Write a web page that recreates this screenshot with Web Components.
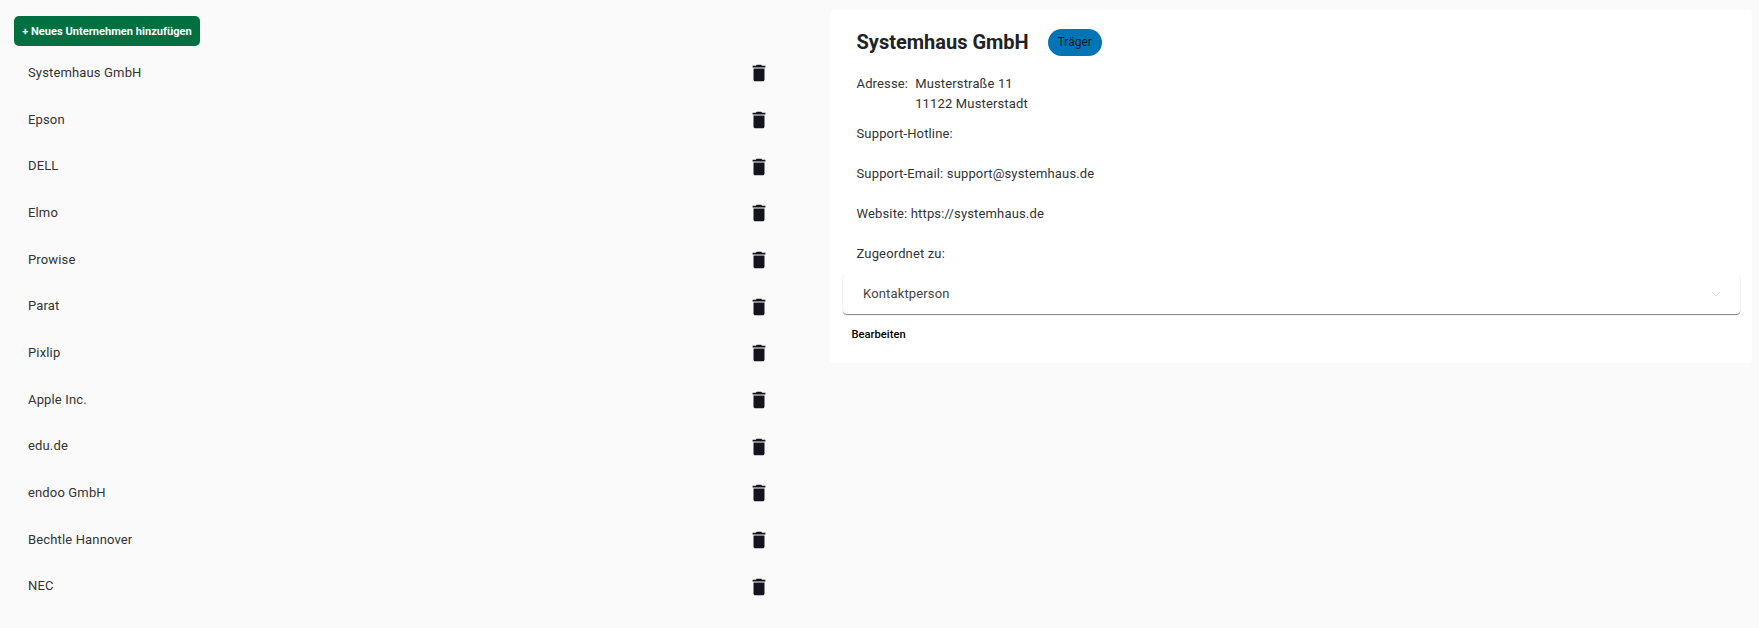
<!DOCTYPE html>
<html lang="de">
<head>
<meta charset="utf-8">
<title>Unternehmen</title>
<style>
  html, body { margin: 0; height: 100%; background: #fafafa; }
  body { font-family: Roboto, "Liberation Sans", sans-serif; overflow: hidden; }
</style>
</head>
<body>
<company-page>
  <company-list slot="list">
    <company-row name="Systemhaus GmbH"></company-row>
    <company-row name="Epson"></company-row>
    <company-row name="DELL"></company-row>
    <company-row name="Elmo"></company-row>
    <company-row name="Prowise"></company-row>
    <company-row name="Parat"></company-row>
    <company-row name="Pixlip"></company-row>
    <company-row name="Apple Inc."></company-row>
    <company-row name="edu.de"></company-row>
    <company-row name="endoo GmbH"></company-row>
    <company-row name="Bechtle Hannover"></company-row>
    <company-row name="NEC"></company-row>
  </company-list>
  <company-detail slot="detail" name="Systemhaus GmbH" chip="Träger">
    <info-line>Support-Hotline:</info-line>
    <info-line>Support-Email: support@systemhaus.de</info-line>
    <info-line>Website: https://systemhaus.de</info-line>
    <info-line>Zugeordnet zu:</info-line>
  </company-detail>
</company-page>

<script>
class CompanyPage extends HTMLElement {
  constructor() {
    super();
    this.attachShadow({ mode: "open" });
    this.shadowRoot.innerHTML = `
    <style>
      :host {
        display: grid;
        grid-template-columns: 830px 922px;
        align-items: start;
      }
      .detail { padding-top: 10px; }
    </style>
    <div class="list"><slot name="list"></slot></div>
    <div class="detail"><slot name="detail"></slot></div>
    `;
  }
}

class CompanyList extends HTMLElement {
  constructor() {
    super();
    this.attachShadow({ mode: "open" });
    this.shadowRoot.innerHTML = `
    <style>
      :host { display: block; padding: 16px 0 0 14px; }
      button {
        display: block;
        width: 186px;
        height: 30px;
        padding: 0;
        border: 0;
        border-radius: 5px;
        background: #007041;
        color: #fff;
        font: 700 11.1px Roboto, sans-serif;
        white-space: nowrap;
      }
      .rows { display: flex; flex-direction: column; width: 756px; margin-top: 3px; }
    </style>
    <button>+ Neues Unternehmen hinzufügen</button>
    <div class="rows"><slot></slot></div>
    `;
  }
}

class CompanyRow extends HTMLElement {
  constructor() {
    super();
    this.attachShadow({ mode: "open" });
    this.shadowRoot.innerHTML = `
    <style>
      :host {
        display: flex;
        align-items: center;
        justify-content: space-between;
        height: 46.68px;
        padding-left: 14px;
        font-size: 13px;
        letter-spacing: 0.15px;
        color: #333;
      }
      svg { display: block; width: 22px; height: 22px; margin-top: 2px; fill: #14141f; }
    </style>
    <span class="name"></span>
    <svg viewBox="0 0 24 24"><path d="M6 19c0 1.1.9 2 2 2h8c1.1 0 2-.9 2-2V7H6v12zM19 4h-3.5l-1-1h-5l-1 1H5v2h14V4z"/></svg>
    `;
  }
  connectedCallback() {
    this.shadowRoot.querySelector(".name").textContent = this.getAttribute("name");
  }
}

class InfoLine extends HTMLElement {
  constructor() {
    super();
    this.attachShadow({ mode: "open" });
    this.shadowRoot.innerHTML = `
    <style>
      :host {
        display: block;
        height: 40.2px;
        padding-left: 26.5px;
        font-size: 13px;
        line-height: 20px;
        letter-spacing: 0.15px;
        color: #333;
      }
    </style>
    <slot></slot>
    `;
  }
}

class CompanyDetail extends HTMLElement {
  constructor() {
    super();
    this.attachShadow({ mode: "open" });
    this.shadowRoot.innerHTML = `
    <style>
      :host {
        display: block;
        height: 353px;
        box-sizing: border-box;
        padding-top: 19px;
        background: #fff;
        border-radius: 4px;
        color: #222;
      }
      header { display: flex; align-items: center; gap: 19px; height: 26px; padding-left: 26.5px; }
      h1 { margin: 0; font-size: 20px; font-weight: 700; line-height: 26px; color: #222; }
      .chip {
        width: 54px;
        height: 27px;
        border-radius: 14px;
        background: #0075b5;
        color: #101828;
        font-size: 12px;
        line-height: 27px;
        text-align: center;
      }
      .address {
        display: flex;
        gap: 7px;
        margin-top: 18.5px;
        padding-left: 26.5px;
        font-size: 13px;
        line-height: 20px;
        letter-spacing: 0.15px;
        color: #333;
      }
      .lines { margin-top: 10px; }
      contact-accordion { margin: -10.5px 12.5px 0 13px; }
      .edit {
        margin: 11.5px 0 0 21.5px;
        font-size: 11.2px;
        font-weight: 500;
        line-height: 20px;
        color: #000;
      }
    </style>
    <header><h1></h1><span class="chip"></span></header>
    <div class="address">
      <span>Adresse:</span>
      <span>Musterstraße 11<br>11122 Musterstadt</span>
    </div>
    <div class="lines"><slot></slot></div>
    <contact-accordion>Kontaktperson</contact-accordion>
    <div class="edit">Bearbeiten</div>
    `;
  }
  connectedCallback() {
    this.shadowRoot.querySelector("h1").textContent = this.getAttribute("name");
    this.shadowRoot.querySelector(".chip").textContent = this.getAttribute("chip");
  }
}

class ContactAccordion extends HTMLElement {
  constructor() {
    super();
    this.attachShadow({ mode: "open" });
    this.shadowRoot.innerHTML = `
    <style>
      :host {
        display: flex;
        align-items: center;
        justify-content: space-between;
        height: 40px;
        padding: 0 19px 0 20px;
        background: #fff;
        border-radius: 4px;
        box-shadow: 0 1px 1px rgba(0,0,0,.5), 0 0 1px rgba(0,0,0,.03);
        font-size: 13px;
        letter-spacing: 0.15px;
        color: #444;
      }
      svg { display: block; width: 10px; height: 6px; fill: none; stroke: #e4e4e8; stroke-width: 1; }
    </style>
    <span><slot></slot></span>
    <svg viewBox="0 0 10 6"><path d="M1 1l4 4 4-4"/></svg>
    `;
  }
}

customElements.define("company-page", CompanyPage);
customElements.define("company-list", CompanyList);
customElements.define("company-row", CompanyRow);
customElements.define("info-line", InfoLine);
customElements.define("company-detail", CompanyDetail);
customElements.define("contact-accordion", ContactAccordion);
</script>
</body>
</html>
